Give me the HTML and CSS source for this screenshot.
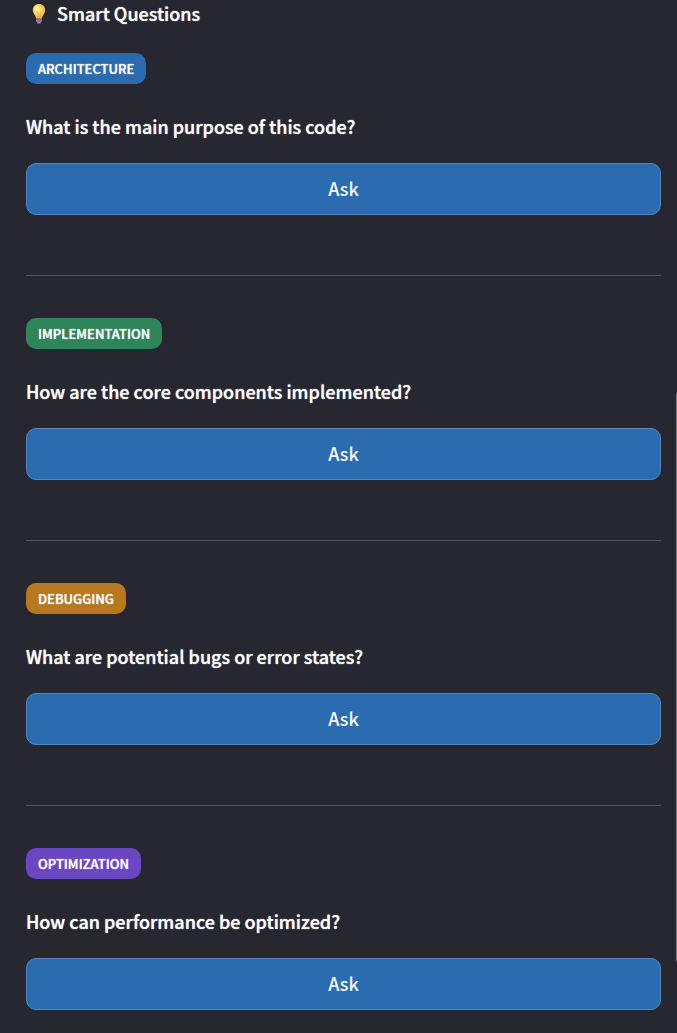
FILE: index.html
```
<!DOCTYPE html>

<html lang="en">

<head>

	<meta charset="utf-8" />

	<meta name="viewport" content="width=device-width, initial-scale=1">

	<title>Smart Questions</title>

	<link rel="stylesheet" href="styles.css">

</head>

<body>

    <main>

        <h1>
            <svg class="bulb" viewBox="0 0 20 20" aria-hidden="true">
                <defs>
                    <radialGradient id="glow" cx="0.4" cy="0.45" r="0.65">
                        <stop offset="0" stop-color="#fff0a0" />
                        <stop offset="0.5" stop-color="#ffd45a" />
                        <stop offset="1" stop-color="#f5a83b" />
                    </radialGradient>
                </defs>
                <path d="M10 0C6.300 0 3.800 2.600 3.800 6C3.800 9.300 6.300 10.600 7.200 14.400H12.800C13.700 10.600 16.200 9.300 16.200 6C16.200 2.600 13.700 0 10 0Z" fill="url(#glow)" />
                <path d="M8.800 14V9L7.600 7.400M11.200 14V9L12.400 7.400" fill="none" stroke="#f09a35" stroke-width="0.800" />
                <ellipse cx="7.600" cy="3.800" rx="1.800" ry="1.300" fill="#fff8d0" transform="rotate(-35 7.600 3.800)" />
                <path d="M7 14.400H13V17.400L11.700 18.300V19.500H8.300V18.300L7 17.400Z" fill="#a58bb8" />
                <path d="M7 15.700L13 15.200M7 17.300L13 16.800" stroke="#65507d" stroke-width="0.700" />
            </svg>
            Smart Questions
        </h1>

        <section>
            <span class="badge architecture">ARCHITECTURE</span>
            <h2 id="q1">What is the main purpose of this code?</h2>
            <button aria-describedby="q1">Ask</button>
        </section>

        <hr>

        <section>
            <span class="badge implementation">IMPLEMENTATION</span>
            <h2 id="q2">How are the core components implemented?</h2>
            <button aria-describedby="q2">Ask</button>
        </section>

        <hr>

        <section>
            <span class="badge debugging">DEBUGGING</span>
            <h2 id="q3">What are potential bugs or error states?</h2>
            <button aria-describedby="q3">Ask</button>
        </section>

        <hr>

        <section>
            <span class="badge optimization">OPTIMIZATION</span>
            <h2 id="q4">How can performance be optimized?</h2>
            <button aria-describedby="q4">Ask</button>
        </section>

    </main>

    <div class="scrollbar"></div>

</body>

</html>
```

FILE: styles.css
```
*{
    box-sizing: border-box;
}

body{
    margin: 0;
    background: #262730;
    color: #fafafa;
    font-family: "Source Sans Pro", "Noto Sans CJK SC", sans-serif;
}

main{
    padding: 0 16px 22px 26px;
}

h1, h2, .badge{
    font-weight: 500;
    text-shadow: 0 0 1px #fafafa;
}

h1{
    display: flex;
    align-items: center;
    gap: 8px;
    margin: 0 0 26px;
    padding-left: 3px;
    font-size: 18px;
    line-height: 27px;
}

.bulb{
    width: 20px;
    height: 20px;
}

section{
    display: flex;
    flex-direction: column;
    align-items: flex-start;
}

.badge{
    padding: 0 12px;
    border-radius: 10px;
    font-size: 13px;
    line-height: 31px;
}

.architecture{
    background: #2b6cb0;
}

.implementation{
    background: #2f855a;
}

.debugging{
    background: #b7791f;
}

.optimization{
    background: #6b46c1;
}

h2{
    margin: 27px 0 22px;
    font-size: 18px;
    line-height: 30px;
}

button{
    width: 100%;
    height: 52px;
    padding: 0 0 2px;
    border: 1px solid #4f86c2;
    border-radius: 10px;
    background: #2b6cb0;
    color: #fafafa;
    font-family: inherit;
    font-size: 18px;
    font-weight: 500;
    cursor: pointer;
}

button:hover{
    background: #2c5282;
}

hr{
    height: 1px;
    margin: 60px 0 42px;
    border: 0;
    background: #51525a;
}

/* thin scroll thumb on the right edge */
.scrollbar{
    position: fixed;
    top: 38vh;
    right: 0;
    width: 1px;
    height: 55vh;
    background: #7d7d80;
}
```
